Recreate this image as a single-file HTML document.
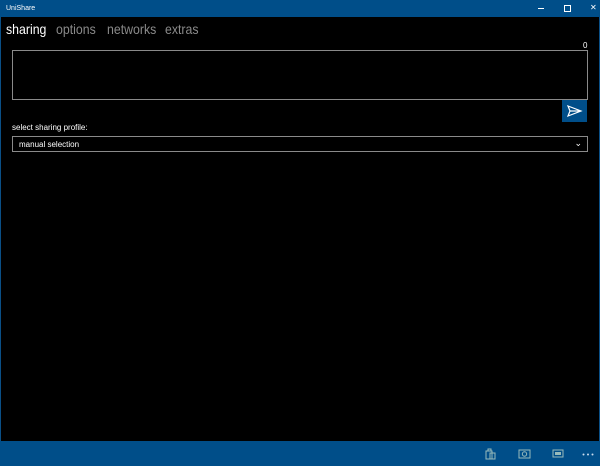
<!DOCTYPE html><html><head><style>
body{margin:0;width:600px;height:466px;background:#000;position:relative;overflow:hidden;font-family:"Liberation Sans",sans-serif;}
.frame{position:absolute;left:0;top:0;width:598px;height:464px;border:1px solid #0a4f86;}
.tb{position:absolute;left:0;top:0;width:600px;height:17px;background:#004e89;color:#fff;font-size:7px;}
.tb span{position:absolute;top:5px}
.tab{position:absolute;top:21px;font-size:14px;color:#8a8a8a;transform:scaleX(0.88);transform-origin:left}
.box{position:absolute;border:1px solid #8a8a8a;box-sizing:border-box}
.bb{position:absolute;left:0;top:441px;width:600px;height:25px;background:#004e89}
</style></head><body>
<div class="frame"></div>
<div class="tb"><span style="left:6px">UniShare</span>
<span style="left:538px;top:8px;width:6px;height:1px;background:#fff"></span>
<span style="left:564px;top:5px;width:5px;height:5px;border:1px solid #fff"></span>
<span style="left:590px;top:3px;font-size:8px">✕</span></div>
<div class="tab" style="left:6px;color:#fff">sharing</div>
<div class="tab" style="left:56px">options</div>
<div class="tab" style="left:107px">networks</div>
<div class="tab" style="left:165px">extras</div>
<div style="position:absolute;left:583px;top:41px;font-size:8px;color:#fff">0</div>
<div class="box" style="left:12px;top:50px;width:576px;height:50px"></div>
<div style="position:absolute;left:562px;top:100px;width:25px;height:22px;background:#004e89">
<svg width="25" height="22" viewBox="0 0 25 22"><path d="M6 6 L19 11 L6 16 L8 11 Z M8 11 H19" fill="none" stroke="#fff" stroke-width="1.2"/></svg></div>
<div style="position:absolute;left:12px;top:123px;font-size:8px;color:#fff">select sharing profile:</div>
<div class="box" style="left:12px;top:136px;width:576px;height:16px;color:#fff;font-size:8px;padding:3px 0 0 6px">manual selection<span style="position:absolute;right:5px;top:1px;font-size:9px">⌄</span></div>
<div class="bb">
<svg style="position:absolute;left:485px;top:7px" width="12" height="12"><rect x="1" y="3" width="6" height="8" fill="none" stroke="#9bb" stroke-width="1"/><rect x="5" y="5" width="5" height="6" fill="none" stroke="#9bb"/><rect x="3" y="1" width="3" height="2" fill="none" stroke="#9bb"/></svg>
<svg style="position:absolute;left:518px;top:7px" width="14" height="11"><rect x="1" y="2" width="11" height="8" fill="none" stroke="#9bb"/><circle cx="6.5" cy="6" r="2.2" fill="none" stroke="#9bb"/></svg>
<svg style="position:absolute;left:552px;top:8px" width="13" height="10"><rect x="1" y="1" width="10" height="7" fill="none" stroke="#9bb"/><rect x="3" y="3" width="6" height="3" fill="#9bb"/></svg>
<svg style="position:absolute;left:582px;top:12px" width="12" height="3"><circle cx="1.5" cy="1.5" r="1" fill="#cde"/><circle cx="6" cy="1.5" r="1" fill="#cde"/><circle cx="10.5" cy="1.5" r="1" fill="#cde"/></svg>
</div>
</body></html>
